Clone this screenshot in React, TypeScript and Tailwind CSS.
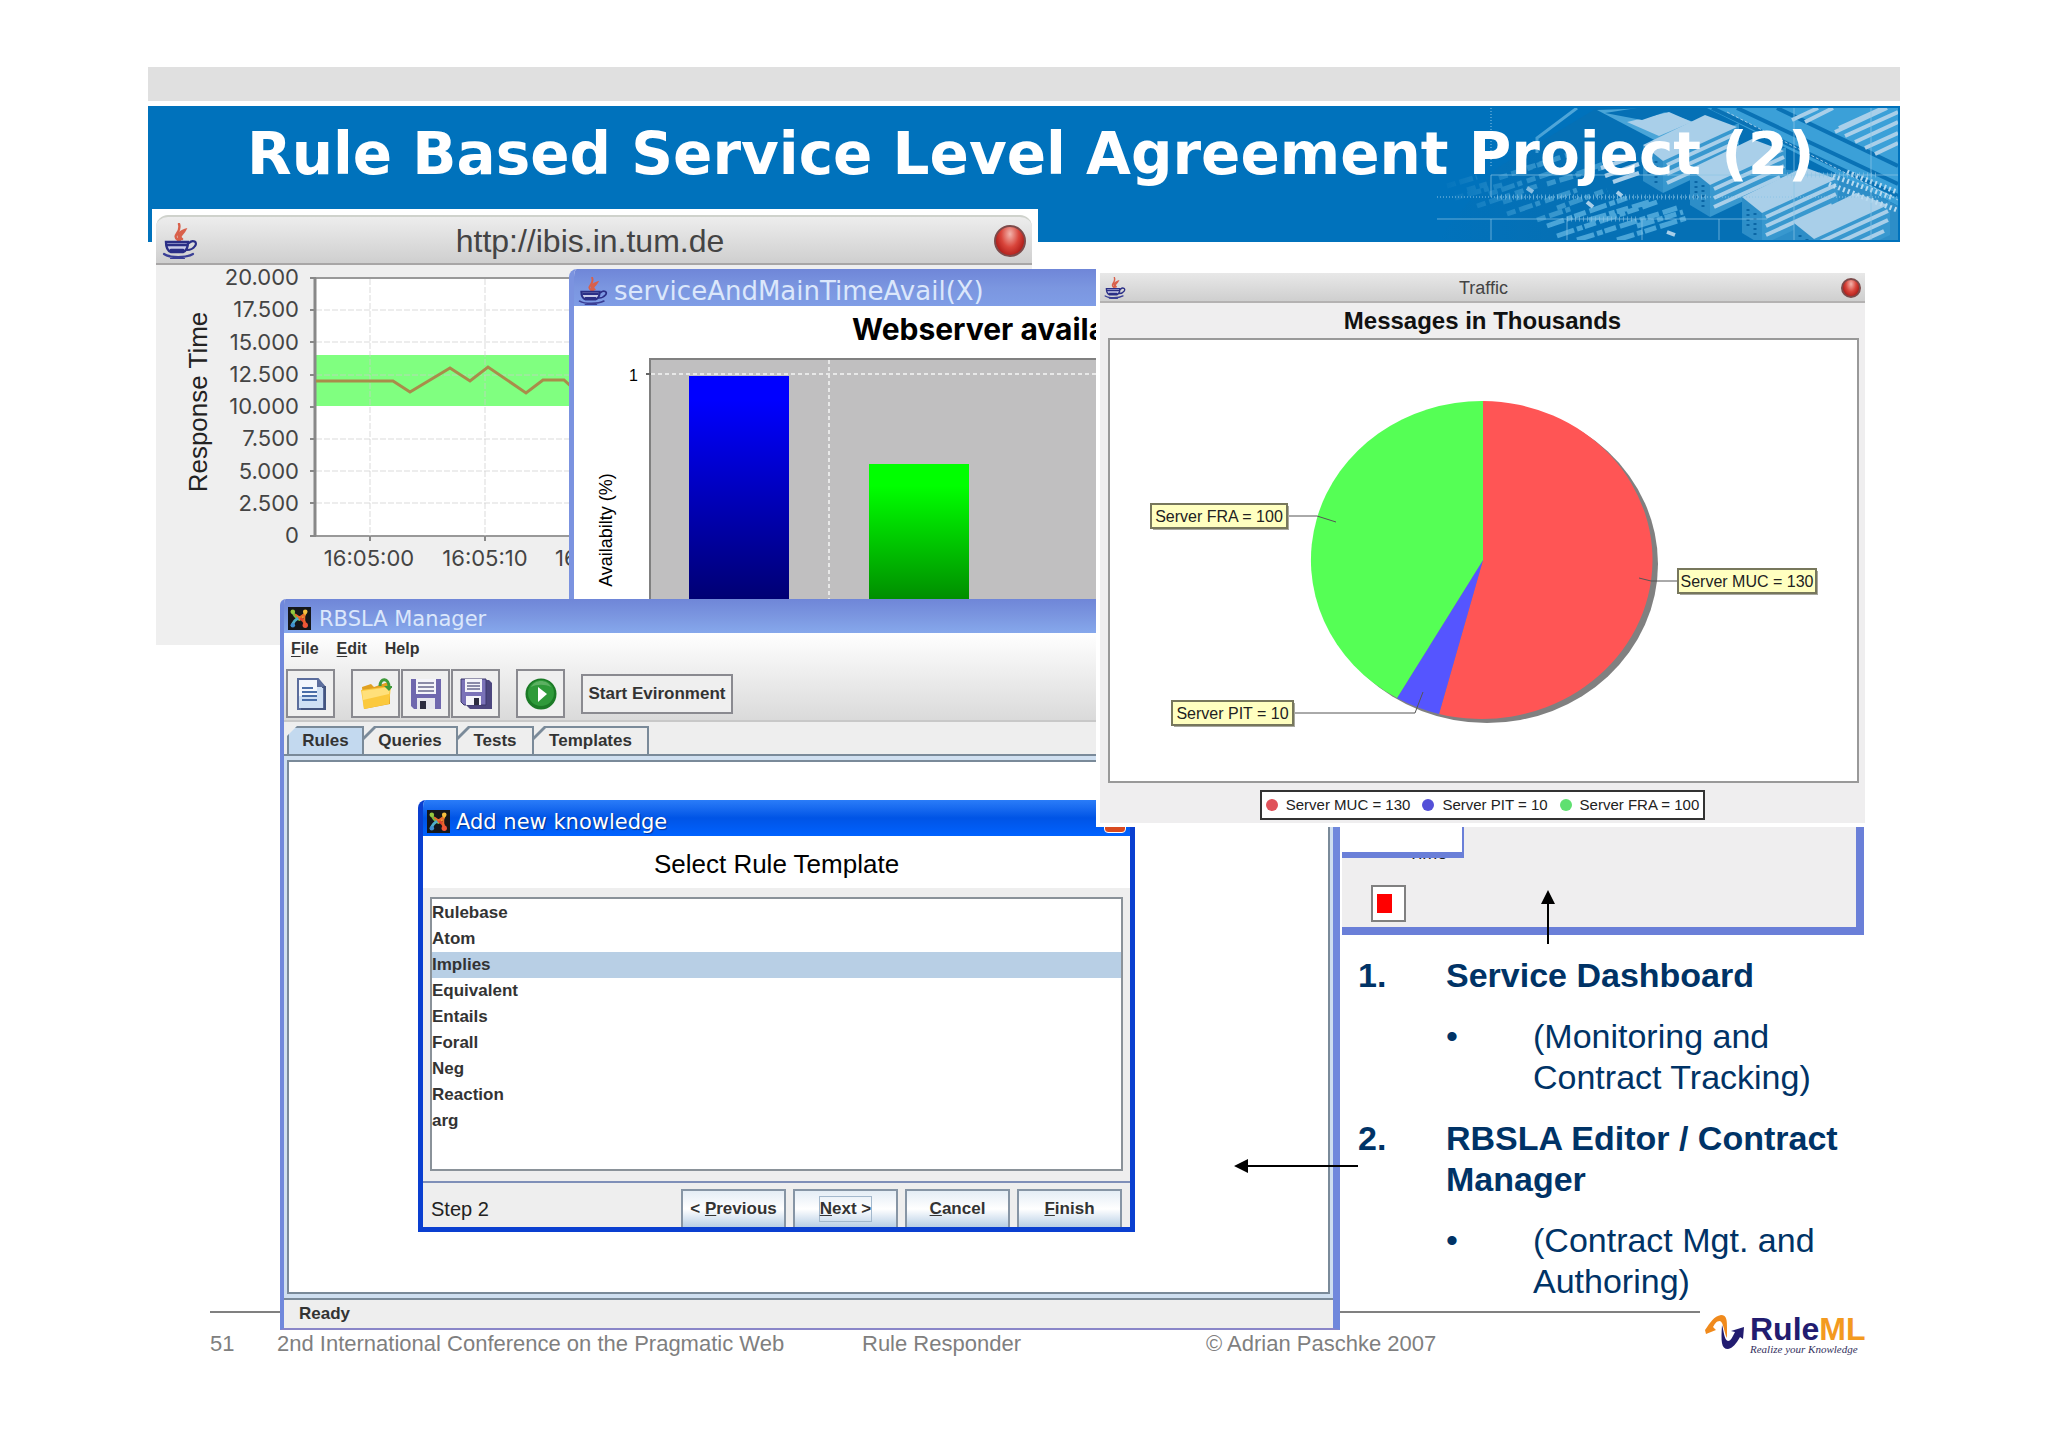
import type { ReactNode } from 'react';

const templates = ['Rulebase', 'Atom', 'Implies', 'Equivalent', 'Entails', 'Forall', 'Neg', 'Reaction', 'arg'];

const yLabels = ['20.000', '17.500', '15.000', '12.500', '10.000', '7.500', '5.000', '2.500', '0'];

const servers = [
  { label: 'Server MUC = 130', dot: 'bg-[#e0525a]' },
  { label: 'Server PIT = 10', dot: 'bg-[#5450d8]' },
  { label: 'Server FRA = 100', dot: 'bg-[#5fe070]' },
];

const goals = [
  { title: 'Service Dashboard', detail: '(Monitoring and Contract Tracking)' },
  { title: 'RBSLA Editor / Contract Manager', detail: '(Contract Mgt. and Authoring)' },
];

function JavaIcon({ className }: { className: string }) {
  return (
    <svg viewBox="0 0 36 36" className={className} fill="none" strokeLinecap="round" preserveAspectRatio="none">
      <path d="M16 17c-7-5 4-7 1-16M20 16c-4-3 1-5 3-9-6 2-8 5-5 10" stroke="#d9604a" strokeWidth="2.4" />
      <path d="M4 19h22c0 5-2 9-5 10H9c-3-1-5-5-5-10z" fill="#c9cbe8" stroke="#2b2f86" strokeWidth="2.4" />
      <path d="M6 22h18M9 27h12" stroke="#2b2f86" strokeWidth="2.6" />
      <path d="M27 20c4-4 9-1 6 3-2 3-5 4-8 4" stroke="#2b2f86" strokeWidth="2.2" />
      <path d="M2 31c6 4 22 4 29 0M9 35h13" stroke="#3a3f96" strokeWidth="2.2" />
    </svg>
  );
}

function AppIcon() {
  return (
    <svg viewBox="0 0 24 24" className="h-[23px] w-[23px] shrink-0" fill="none" strokeLinecap="round">
      <rect width="24" height="24" fill="#15171a" />
      <path d="M5 5c1 4 4 6 7 8" stroke="#7ab83c" strokeWidth="3" />
      <path d="M18 5c0 4-3 6-6 7" stroke="#f0a52c" strokeWidth="3" />
      <path d="M5 19c0-4 3-6 7-8" stroke="#4fb0c8" strokeWidth="3" />
      <path d="M18 19c0-4-3-6-6-8" stroke="#e0452c" strokeWidth="3" />
      <path d="M8 8l4 3 4-3M17 9v7" stroke="#e86a2c" strokeWidth="2" />
      <circle cx="5" cy="5" r="2.4" fill="#96c93f" />
      <circle cx="18" cy="5" r="2.4" fill="#f6bf3e" />
      <circle cx="5" cy="19" r="2.4" fill="#3f8fd0" />
      <circle cx="18" cy="19" r="2.8" fill="#ee5538" />
    </svg>
  );
}

function RedOrb({ className }: { className: string }) {
  return (
    <button
      aria-label="Close"
      className={`rounded-full border-2 border-[#7d4a4a] bg-[radial-gradient(ellipse_at_50%_25%,#f3b5ad_0%,#d9453b_45%,#b3201c_75%,#e88a80_100%)] ${className}`}
    />
  );
}

// Harbour photo at the right end of the headline, reduced to tints of blue
function HarbourArt() {
  const stacks = [
    { x: 206, y: 29 },
    { x: 253, y: 53 },
    { x: 305, y: 81 },
    { x: 357, y: 107 },
  ];
  return (
    <svg viewBox="0 0 461 132" className="absolute top-[2px] right-[2px] h-[132px] w-[461px]" fill="none">
      <defs>
        <linearGradient id="fade" x1="0" x2="1" y1="0" y2="0">
          <stop offset="0" stopColor="#0072bc" />
          <stop offset="0.25" stopColor="#0072bc" stopOpacity="0" />
        </linearGradient>
      </defs>
      <path d="M0 132L60 60L160 0H461V132z" fill="#0570b5" />
      <path d="M270 0H461V98L400 66L330 30z" fill="#3ba0d8" />
      <path d="M330 60L400 66L461 98V132H330z" fill="#2d8ec8" />
      <path d="M140 0L100 30V45" stroke="#4fa6d9" strokeWidth="3" />
      <path d="M160 2L225 36L275 20L215 0z" fill="#4aa5d8" />
      <path d="M190 14L222 28L255 14L232 4z" fill="#a9cfe9" />
      <path d="M168 5L200 0L240 0L205 12z" fill="#0570b5" />
      <path d="M275 0L461 88M300 0L461 76M340 0L461 58" stroke="#0a72b5" strokeWidth="4" />
      <path d="M290 4L461 92" stroke="#9fcbe8" strokeWidth="1" strokeDasharray="3 2" />
      <path d="M355 12l26-12M368 14l28-14M398 24l52-24M408 28l53-24M418 34l43-20M428 40l33-15M438 46l23-11M402 20l44-20" stroke="#a9cfe9" strokeWidth="4" />
      <path
        d="M10 78l30-9M18 90l50-14M40 98l60-20M70 106l70-24M52 86l70-24M62 70l60-20M90 60l50-16M100 112l36-12M120 100l50-18M140 66l36-14M30 82l20-6M110 76l60-18M66 94l20-6"
        stroke="#3796cd"
        strokeWidth="5"
        strokeDasharray="9 4 14 3 5 5"
      />
      <path
        d="M110 118l80-28M120 128l100-34M140 132l100-32M180 132l70-22M200 118l46-14M152 112l60-18"
        stroke="#4aa5d8"
        strokeWidth="5"
        strokeDasharray="18 3 6 2 12 4"
      />
      <path d="M164 60l30-10M168 68l34-12M176 74l26-9M90 80l6 4M150 94l6 5M180 84l5 4M230 124l8 3" stroke="#a9cfe9" strokeWidth="4" />
      {stacks.map((s) => (
        <g key={s.x}>
          <path d={`M${s.x} ${s.y + 8}l20 14v34l-20-12z`} fill="#2d8ec8" />
          <path d={`M${s.x + 20} ${s.y + 20}l76-34v34l-76 36z`} fill="#3898cf" />
          <path d={`M${s.x} ${s.y + 8}l62-30l32 12l-74 34z`} fill="#a9cfe9" />
          <path
            d={`M${s.x + 24} ${s.y + 28}l70-32M${s.x + 24} ${s.y + 37}l70-32M${s.x + 24} ${s.y + 46}l66-30`}
            stroke="#a9cfe9"
            strokeWidth="4"
          />
          <path d={`M${s.x + 6} ${s.y + 20}v20M${s.x + 13} ${s.y + 24}v22`} stroke="#0a66a5" strokeWidth="3" strokeDasharray="2 3" />
        </g>
      ))}
      <path d="M396 68l60 22M392 76l68 26M410 64l50 20" stroke="#b9dbf0" strokeWidth="5" strokeDasharray="2 3" />
      <rect width="461" height="132" fill="url(#fade)" />
      <path d="M0 111H330M54 67H461M54 111v21M130 111v21M205 111v21M282 111v21M357 0v132M434 0v132M54 67v22" stroke="#8cc4e6" strokeOpacity="0.7" />
      <path d="M0 89H461M54 0v60" stroke="#8cc4e6" strokeDasharray="1 2" />
      <path d="M60 89H270M350 67H440M130 111h70" stroke="#8cc4e6" strokeOpacity="0.6" strokeWidth="5" strokeDasharray="1 3" />
    </svg>
  );
}

function ResponseTimeWindow() {
  return (
    <section className="absolute top-[-33px] left-[4px] flex h-[436px] w-[886px] flex-col bg-white px-1 pt-1.5">
      <div className="flex h-[50px] w-[876px] items-center justify-between rounded-t-xl border-t-2 border-b-2 border-t-[#cfd2cc] border-b-[#a8a6a6] bg-linear-to-b from-[#ededed] to-[#cfcfcf] px-1.5 pt-0.5">
        <JavaIcon className="h-9 w-9" />
        <h2 className="pr-3 text-[32px] leading-9 text-[#444]">http://ibis.in.tum.de</h2>
        <RedOrb className="h-8 w-8" />
      </div>
      <svg viewBox="156 264 876 380" className="w-[876px] flex-1 bg-[#efefef]">
        <rect x="315" y="277" width="716" height="258" fill="#fff" stroke="#999" strokeWidth="2" />
        <rect x="316" y="354" width="714" height="51" fill="#80ff80" />
        <g stroke="#ccc" strokeOpacity="0.7" strokeDasharray="6 2">
          <path d="M316 309h715M316 341h715M316 374h715M316 438h715M316 470h715M316 502h715" />
          <path d="M370 278v257M485 278v257" />
        </g>
        <path d="M310 277h6M310 309h6M310 341h6M310 374h6M310 406h6M310 438h6M310 470h6M310 502h6M310 535h6M370 535v5M485 535v5" stroke="#888" strokeWidth="2" />
        <path d="M315 277v258" stroke="#888" strokeWidth="3" />
        <path d="M316 380h77l17 11 40-24 20 13 18-14 38 26 17-13h21l12 11" fill="none" stroke="#a98c4a" strokeWidth="3" />
        <g className="font-[Inter] text-[22px]" fill="#444">
          {yLabels.map((label, i) => (
            <text key={label} x="299" y={284 + Math.round((i * 258) / 8)} textAnchor="end">
              {label}
            </text>
          ))}
          <text x="369" y="565" textAnchor="middle">16:05:00</text>
          <text x="485" y="565" textAnchor="middle">16:05:10</text>
          <text x="600" y="565" textAnchor="middle">16:05:20</text>
        </g>
        <text transform="translate(207 401) rotate(-90)" textAnchor="middle" className="text-[26px]" fill="#222">
          Response Time
        </text>
      </svg>
    </section>
  );
}

function AvailabilityWindow() {
  return (
    <section className="absolute top-[27px] left-[421px] flex h-[340px] w-[727px] flex-col overflow-hidden rounded-tl-lg border-l-[5px] border-[#7b93e0] bg-white">
      <div className="flex h-[37px] shrink-0 items-center gap-1.5 bg-linear-to-b from-[#6f86d8] via-[#7b96e0] to-[#7f9de6] pt-1.5 pl-1">
        <JavaIcon className="h-7 w-[30px]" />
        <h2 className="font-[DejaVu_Sans] text-[26px] leading-8 whitespace-nowrap text-[#dbe7fb]">serviceAndMainTimeAvail(X)</h2>
      </div>
      <svg viewBox="574 306 722 303" className="h-[303px] w-[722px]">
        <defs>
          <linearGradient id="blueBar" x1="0" x2="0" y1="0" y2="1">
            <stop offset="0.1" stopColor="#0000ff" />
            <stop offset="1" stopColor="#00006c" />
          </linearGradient>
          <linearGradient id="greenBar" x1="0" x2="0" y1="0" y2="1">
            <stop offset="0.15" stopColor="#00ff00" />
            <stop offset="1" stopColor="#008400" />
          </linearGradient>
        </defs>
        <text x="852" y="340" className="font-[Inter] text-[30px] font-bold">Webserver availability</text>
        <rect x="650" y="359" width="640" height="260" fill="#c0bfc0" stroke="#808080" strokeWidth="2" />
        <path d="M651 374h630M829 360v250" stroke="#e8e8e8" strokeWidth="2" strokeDasharray="4 3" />
        <path d="M646 374h5" stroke="#666" strokeWidth="2" />
        <rect x="689" y="376" width="100" height="233" fill="url(#blueBar)" />
        <rect x="869" y="464" width="100" height="145" fill="url(#greenBar)" />
        <text x="629" y="381" className="text-[16px]">1</text>
        <text transform="translate(612 530) rotate(-90)" textAnchor="middle" className="text-[18px]">
          Availabilty (%)
        </text>
      </svg>
    </section>
  );
}

function TimelineWindow() {
  return (
    <section className="absolute top-[570px] left-[1194px] h-[123px] w-[522px] overflow-hidden border-r-8 border-b-8 border-[#6a7fd8] bg-[#efeeef]">
      <p className="absolute top-[29px] left-[66px] text-[18px] leading-6 text-[#222]">Time</p>
      <div className="absolute top-0 left-0 h-[46px] w-[122px] border-r-2 border-b-[6px] border-[#6a7fd8] bg-white" />
      <div className="absolute top-[73px] left-[29px] flex h-[37px] w-[35px] items-center border-2 border-[#808080] bg-white pl-1">
        <span className="h-[19px] w-[15px] bg-[#ff0000]" />
      </div>
    </section>
  );
}

function ToolButton({ label, children }: { label: string; children: ReactNode }) {
  return (
    <button aria-label={label} className="flex h-[49px] w-[49px] items-center justify-center border-2 border-[#8a8a90] bg-[#efefef]">
      <svg viewBox="0 0 32 32" className="h-8 w-8">
        {children}
      </svg>
    </button>
  );
}

function Toolbar() {
  return (
    <div className="flex items-center px-0.5">
      <ToolButton label="New">
        <path d="M3 1h20l6 7v23H3z" fill="#cfe0f4" stroke="#5b6d9c" strokeWidth="2" />
        <path d="M4 2h18v16H4z" fill="#f2f6fc" />
        <path d="M27 9h3v22H6" fill="none" stroke="#44557f" strokeWidth="2" />
        <path d="M22 1v8h7z" fill="#5b6d9c" />
        <path d="M7 10h11M7 14h15M7 18h15M7 22h15" stroke="#4a6ea8" strokeWidth="2" />
      </ToolButton>
      <div className="ml-4 flex gap-px">
        <ToolButton label="Open">
          <path d="M2 9l9-3 3 3 14-5 2 4v18L4 31z" fill="#e0a020" />
          <path d="M1 12l30-4-2 18-25 5z" fill="#fbc93d" />
          <path d="M2 13l28-4-1 7-26 6z" fill="#ffe07a" />
          <path d="M20 8c0-9 9-8 9 1" fill="none" stroke="#3f9a3a" strokeWidth="3" />
          <path d="M24 8h9l-4 5z" fill="#3f9a3a" />
        </ToolButton>
        <ToolButton label="Save">
          <path d="M1 1h30v30H4l-3-3z" fill="#6f67ae" />
          <path d="M6 1h20v15H6z" fill="#f4f4fa" />
          <path d="M8 5h16M8 9h16M8 13h16" stroke="#8a8aa8" strokeWidth="2" />
          <path d="M7 20h18v11H7z" fill="#e6e6ee" />
          <path d="M10 23h6v8h-6z" fill="#2c2c40" />
        </ToolButton>
        <ToolButton label="Save all">
          <path d="M7 2h22l3 3v26H10l-3-3z" fill="#4d477f" />
          <path d="M1 1h25v26H4l-3-3z" fill="#7a72b8" stroke="#3d386c" />
          <path d="M5 1h17v13H5z" fill="#f4f4fa" />
          <path d="M7 5h13M7 8h13M7 11h13" stroke="#8a8aa8" strokeWidth="2" />
          <path d="M6 18h15v9H6z" fill="#f4f4fa" />
          <path d="M14 20h5v7h-5z" fill="#2c2c40" />
        </ToolButton>
      </div>
      <div className="ml-4">
        <ToolButton label="Run">
          <circle cx="16" cy="16" r="15.5" fill="#1b7a26" />
          <circle cx="16" cy="15" r="13" fill="#2f9a3a" />
          <path d="M6 9c4-8 16-8 20 0-6-3-14-3-20 0z" fill="#5cb062" />
          <path d="M13 9l9 7-9 8z" fill="#fff" />
        </ToolButton>
      </div>
      <button className="ml-4 h-10 w-[152px] border-2 border-[#8a8a90] bg-[#efefef] text-[17px] font-bold whitespace-nowrap text-[#333]">
        Start Evironment
      </button>
    </div>
  );
}

function Tab({ label, width, active = false }: { label: string; width: string; active?: boolean }) {
  return (
    <button
      role="tab"
      aria-selected={active}
      className={`h-7 border-t-2 border-r-2 border-[#7a8a99] text-[17px] font-bold text-[#333] [clip-path:polygon(10px_0,100%_0,100%_100%,0_100%,0_10px)] ${width} ${
        active ? 'border-l-2 bg-[#c3d9ef]' : 'bg-[linear-gradient(135deg,#7a8a99_8px,#eee_9px)]'
      }`}
    >
      {label}
    </button>
  );
}

function ManagerWindow() {
  return (
    <section className="absolute top-[357px] left-[132px] flex h-[731px] w-[1060px] flex-col overflow-hidden rounded-tl-md border-r-[7px] border-b-2 border-l-4 border-[#7088dc] border-b-[#8a86c8] bg-[#eee]">
      <div className="flex h-[34px] shrink-0 items-center gap-2 bg-linear-to-b from-[#6f86d8] via-[#7b96e0] to-[#86a8ec] pt-1 pl-1">
        <AppIcon />
        <h2 className="pt-0.5 font-[DejaVu_Sans] text-[21px] leading-7 text-[#dbe7fb]">RBSLA Manager</h2>
      </div>
      <div className="flex h-[89px] flex-col border-b-2 border-[#c8c8c8] bg-linear-to-b from-white to-[#dadada]">
        <nav className="flex h-9 items-center gap-[18px] pb-1 pl-[7px] text-[16px] leading-6 font-bold text-[#333]">
          <button className="underline-offset-2"><u>F</u>ile</button>
          <button className="underline-offset-2"><u>E</u>dit</button>
          <button>Help</button>
        </nav>
        <Toolbar />
      </div>
      <div role="tablist" className="flex h-8 items-end pl-[3px]">
        <Tab label="Rules" width="w-[77px]" active />
        <Tab label="Queries" width="w-[94px]" />
        <Tab label="Tests" width="w-[76px]" />
        <Tab label="Templates" width="w-[115px]" />
      </div>
      <div className="flex flex-1 flex-col border-t-2 border-b-2 border-[#7a8a99] bg-[#cfdff0] px-[3px] py-1">
        <div className="flex-1 border-2 border-[#7a8a99] bg-white" />
      </div>
      <p className="h-7 shrink-0 pl-[15px] text-[17px] leading-7 font-bold text-[#333]">Ready</p>
    </section>
  );
}

function DialogButton({ children }: { children: ReactNode }) {
  return (
    <button className="flex h-[38px] w-[105px] items-center justify-center border-2 border-b-0 border-[#8695a5] bg-linear-to-b from-[#e4edf5] via-white to-[#b8cfe5] text-[17px] font-bold whitespace-pre text-[#333]">
      {children}
    </button>
  );
}

function KnowledgeDialog() {
  return (
    <section className="absolute top-[558px] left-[270px] flex h-[432px] w-[717px] flex-col overflow-hidden rounded-t-lg border-x-[5px] border-b-[5px] border-[#0a3fd0] bg-[#eee]">
      <div className="flex h-9 shrink-0 items-center justify-between bg-linear-to-b from-[#2a7cf8] via-[#0054e6] to-[#0062ff] px-1 pt-1.5">
        <div className="flex items-center gap-1.5">
          <AppIcon />
          <h2 className="pt-0.5 font-[DejaVu_Sans] text-[21px] leading-7 text-white [text-shadow:1px_1px_1px_#003090]">Add new knowledge</h2>
        </div>
        <button aria-label="Close dialog" className="h-6 w-[22px] rounded border border-white bg-[#d84a20]" />
      </div>
      <h3 className="h-[52px] shrink-0 bg-white pt-0.5 text-center text-[26px] leading-[52px] text-black">Select Rule Template</h3>
      <ul role="listbox" aria-label="Rule template" className="mx-[7px] mt-[9px] h-[274px] shrink-0 border-2 border-[#8a9299] bg-white pt-px">
        {templates.map((name) => (
          <li
            key={name}
            role="option"
            aria-selected={name === 'Implies'}
            className={`h-[26px] text-[17px] leading-[26px] font-bold text-[#333] ${name === 'Implies' ? 'bg-[#b8cfe5]' : ''}`}
          >
            {name}
          </li>
        ))}
      </ul>
      <div className="mt-2.5 flex flex-1 items-end justify-between border-t-2 border-[#7f8fb8] px-2">
        <p className="pb-1.5 text-[20px] leading-6 text-[#222]">Step 2</p>
        <div className="flex gap-[7px]">
          <DialogButton>{'< '}<u>P</u>revious</DialogButton>
          <DialogButton>
            <span className="border border-[#a3b8cc] leading-6"><u>N</u>ext {'>'}</span>
          </DialogButton>
          <DialogButton><u>C</u>ancel</DialogButton>
          <DialogButton><u>F</u>inish</DialogButton>
        </div>
      </div>
    </section>
  );
}

function PieLabel({ x, y, width, text }: { x: number; y: number; width: number; text: string }) {
  return (
    <g>
      <rect x={x + 2} y={y + 2} width={width} height="24" fill="#a8a8a0" />
      <rect x={x} y={y} width={width} height="24" fill="#ffffc0" stroke="#77775c" strokeWidth="2" />
      <text x={x + width / 2} y={y + 18} textAnchor="middle" className="text-[16px]" fill="#222">
        {text}
      </text>
    </g>
  );
}

function TrafficWindow() {
  return (
    <section className="absolute top-[27px] left-[948px] h-[558px] w-[773px] bg-white p-1">
      <div className="flex h-full flex-col bg-[#efeeef]">
        <div className="flex h-[30px] shrink-0 items-center justify-between border-b-2 border-[#b4b2b2] bg-linear-to-b from-[#e8e8e8] to-[#cfcfcf] px-1 pt-0.5">
          <JavaIcon className="h-[22px] w-[22px]" />
          <h2 className="text-[18px] leading-6 text-[#444]">Traffic</h2>
          <RedOrb className="h-5 w-5" />
        </div>
        <h3 className="h-[35px] shrink-0 pt-0.5 text-center text-[24px] leading-8 font-bold text-[#111]">Messages in Thousands</h3>
        <svg viewBox="1108 338 751 445" className="mr-1.5 ml-2 h-[445px] shrink-0">
          <rect x="1109" y="339" width="749" height="443" fill="#fff" stroke="#999" strokeWidth="2" />
          <ellipse cx="1487" cy="564" rx="171" ry="159" fill="#808080" />
          <path d="M1483 560V401A171 159 0 1 1 1439 714z" fill="#ff5555" />
          <path d="M1483 560L1439 714A171 159 0 0 1 1397 698z" fill="#5555ff" />
          <path d="M1483 560L1397 698A171 159 0 0 1 1483 401z" fill="#55ff55" />
          <path d="M1288 516h29l19 6M1678 581h-27l-12-3M1294 713h121l8-21" fill="none" stroke="#555" />
          <PieLabel x={1151} y={504} width={136} text="Server FRA = 100" />
          <PieLabel x={1678} y={569} width={138} text="Server MUC = 130" />
          <PieLabel x={1172} y={701} width={121} text="Server PIT = 10" />
        </svg>
        <ul className="mx-auto mt-[7px] flex h-[30px] items-center gap-3 border-2 border-[#333] bg-white px-1 text-[15px] leading-6 whitespace-nowrap text-[#222]">
          {servers.map((s) => (
            <li key={s.label} className="flex items-center gap-2">
              <span className={`h-3 w-3 rounded-full ${s.dot}`} />
              {s.label}
            </li>
          ))}
        </ul>
      </div>
    </section>
  );
}

function Arrows() {
  return (
    <svg viewBox="1234 888 324 284" className="absolute top-[647px] left-[1086px] h-[284px] w-[324px]">
      <path d="M1548 902v41M1247 1165h111" stroke="#000" strokeWidth="2" />
      <path d="M1548 889l7 14h-14zM1234 1165l14-7v14z" />
    </svg>
  );
}

function RuleMlLogo() {
  return (
    <a href="#ruleml" className="flex w-[157px] shrink-0 gap-1.5 pt-1">
      <svg viewBox="0 0 39 34" className="h-[34px] w-[39px] shrink-0">
        <path d="M0 15C5 8 9 1 16 0c6 0 6 6 6 13v10c-3-5-3-15-7-17-4 0-5 3-7 6l3 3-10 4z" fill="#f08a1c" />
        <path d="M17 10c2 6 2 15 6 16 3 0 5-5 7-9l-4-1 13-4-1 12-3-2c-4 7-7 11-12 12-7 0-7-8-6-24z" fill="#221c70" />
      </svg>
      <span className="flex flex-col">
        <span className="text-[32px] leading-7 font-bold text-[#221c70]">
          Rule<span className="text-[#f39a1f]">ML</span>
        </span>
        <span className="font-[Liberation_Serif] text-[11px] leading-3 whitespace-nowrap text-[#333060] italic">Realize your Knowledge</span>
      </span>
    </a>
  );
}

export default function App() {
  return (
    <div className="flex min-h-screen flex-col bg-white px-[148px] pt-[67px] font-['Liberation_Sans',Arial,sans-serif]">
      <div className="h-[34px] bg-[#e0e0e0]" />
      <header className="relative mt-[5px] h-[136px] bg-[#0072bc]">
        <HarbourArt />
        <h1 className="relative pt-3 pl-[99px] font-['DejaVu_Sans',Verdana,sans-serif] text-[58px] leading-[72px] font-bold whitespace-nowrap text-white">
          Rule Based Service Level Agreement Project (2)
        </h1>
      </header>

      <main className="relative flex-1">
        <ResponseTimeWindow />
        <AvailabilityWindow />
        <TimelineWindow />
        <ManagerWindow />
        <KnowledgeDialog />
        <TrafficWindow />
        <ol className="flex flex-col gap-5 pt-[713px] pl-[1210px] text-[34px] leading-[41px] text-[#003366]">
          {goals.map((goal, i) => (
            <li key={goal.title} className="flex flex-col gap-5">
              <div className="flex font-bold">
                <span className="w-[88px] shrink-0">{i + 1}.</span>
                <span>{goal.title}</span>
              </div>
              <div className="flex pl-[88px]">
                <span className="w-[87px] shrink-0">•</span>
                <span className="w-[290px]">{goal.detail}</span>
              </div>
            </li>
          ))}
        </ol>
        <Arrows />
      </main>

      <footer className="flex h-[136px] gap-[5px] pr-[38px] pl-[62px] text-[22px] leading-7 text-[#7f7f7f]">
        <div className="flex flex-1 border-t-2 border-[#808080] pt-[17px] whitespace-nowrap">
          <span className="w-[67px]">51</span>
          <span className="w-[585px]">2nd International Conference on the Pragmatic Web</span>
          <span className="w-[344px]">Rule Responder</span>
          <span>© Adrian Paschke 2007</span>
        </div>
        <RuleMlLogo />
      </footer>
    </div>
  );
}
